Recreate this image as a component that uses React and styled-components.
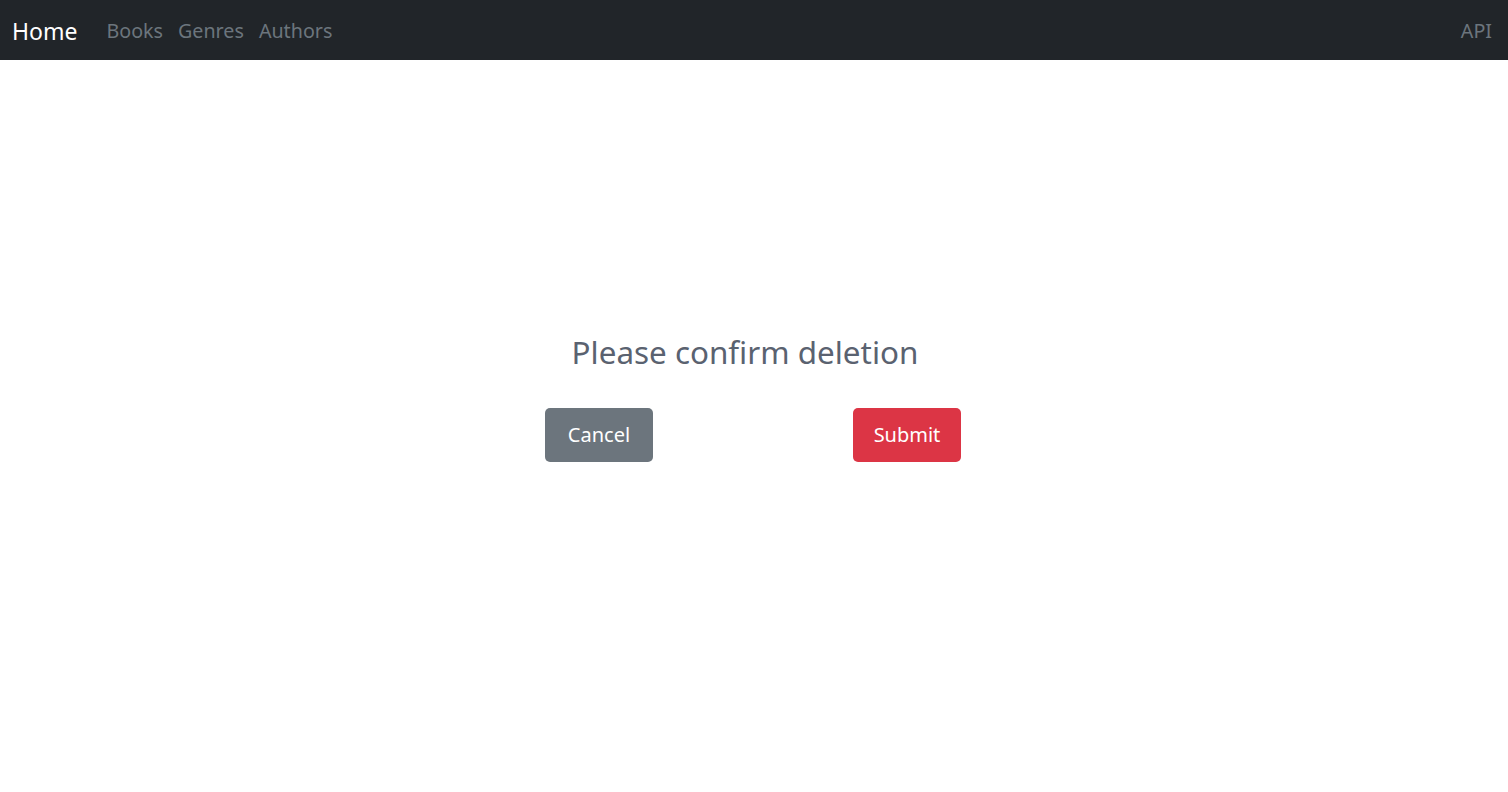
import styled, { createGlobalStyle } from 'styled-components';

const GlobalStyle = createGlobalStyle`
  html, body {
    margin: 0;
    padding: 0;
    background: #fff;
    font-family: "Noto Sans", "Open Sans", sans-serif;
  }
  * {
    box-sizing: border-box;
  }
`;

const Page = styled.div`
  width: 100vw;
  height: 100vh;
  display: flex;
  flex-direction: column;
`;

const NavBar = styled.nav`
  height: 60px;
  background: #212529;
  display: flex;
  align-items: center;
  padding: 0 16px 0 12px;
`;

const Brand = styled.a`
  color: #fff;
  font-size: 23px;
  margin-right: 29px;
  text-decoration: none;
  margin-top: 2px;
`;

const NavLinks = styled.div`
  display: flex;
  gap: 15px;
  flex: 1;
`;

const NavLink = styled.a`
  color: #6c757d;
  font-size: 19.7px;
  text-decoration: none;
`;

const Main = styled.main`
  flex: 1;
  display: flex;
  flex-direction: column;
  align-items: center;
  justify-content: center;
  padding: 0 2px 61px 0;
`;

const Title = styled.h3`
  margin: 0 16px 35px 0;
  font-size: 31.4px;
  font-weight: 400;
  color: #5a6270;
`;

const ButtonRow = styled.div`
  display: flex;
  gap: 200px;
`;

const Button = styled.button`
  width: 108px;
  height: 54px;
  border: none;
  border-radius: 5px;
  font-family: inherit;
  font-size: 20px;
  color: #fff;
  background: ${(p) => (p.$danger ? '#dc3545' : '#6c757d')};
  cursor: pointer;
`;

const App = () => {
  return (
    <Page>
      <GlobalStyle />
      <NavBar>
        <Brand href="#">Home</Brand>
        <NavLinks>
          <NavLink href="#">Books</NavLink>
          <NavLink href="#">Genres</NavLink>
          <NavLink href="#">Authors</NavLink>
        </NavLinks>
        <NavLink href="#">API</NavLink>
      </NavBar>
      <Main>
        <Title>Please confirm deletion</Title>
        <ButtonRow>
          <Button type="button">Cancel</Button>
          <Button type="button" $danger>Submit</Button>
        </ButtonRow>
      </Main>
    </Page>
  );
};

export default App;
